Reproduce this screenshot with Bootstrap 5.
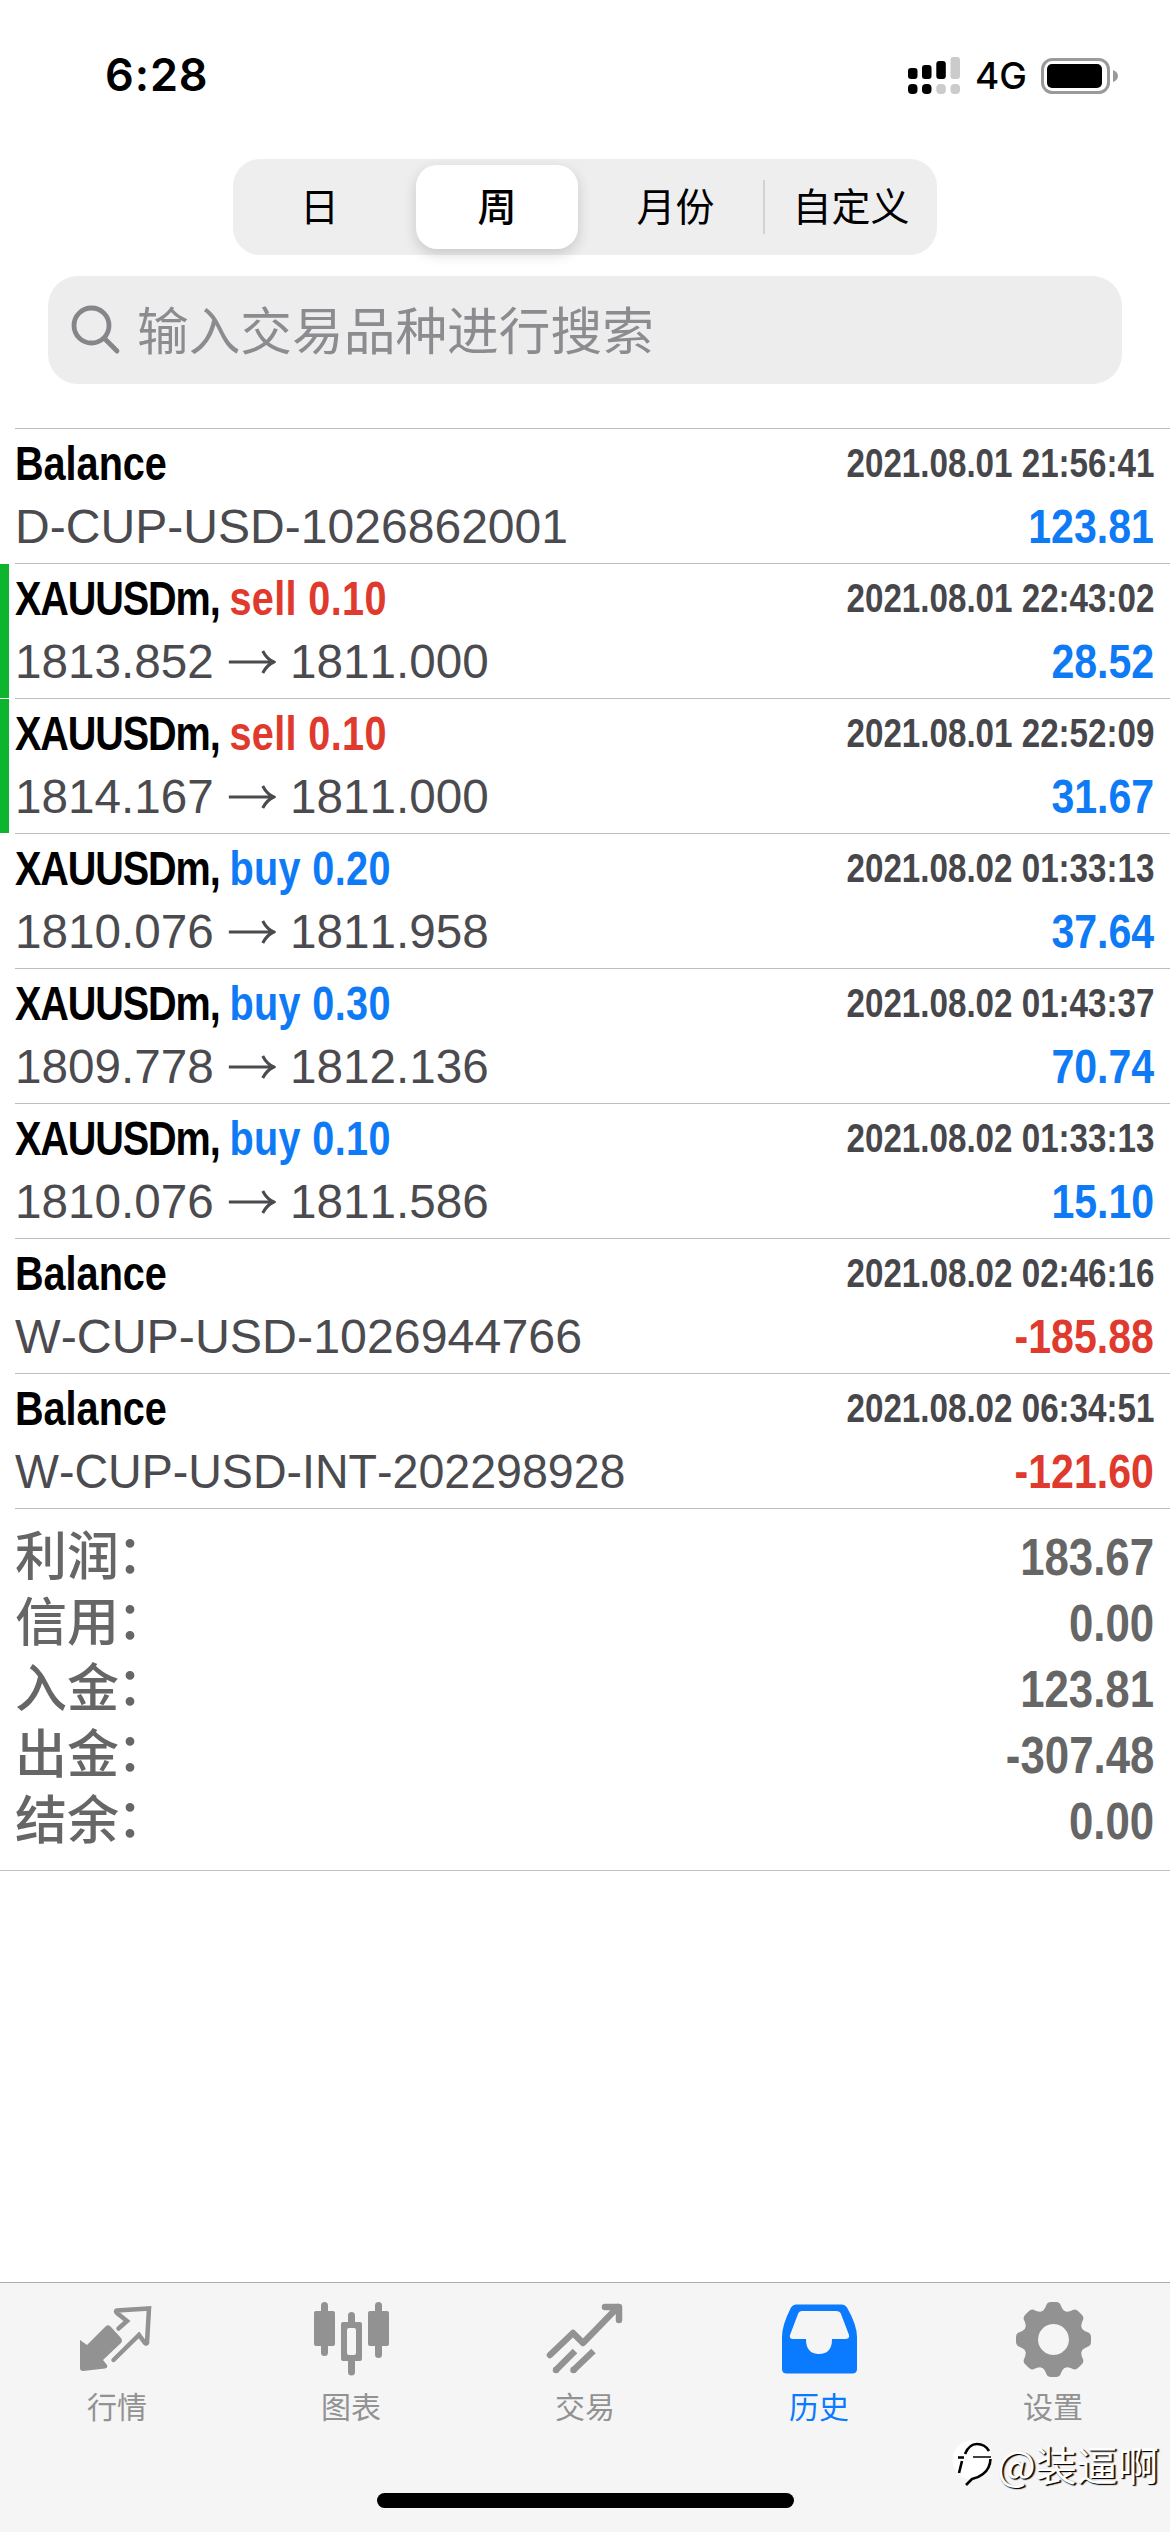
<!DOCTYPE html>
<html lang="zh-CN">
<head>
<meta charset="utf-8">
<title>历史</title>
<link rel="stylesheet" href="https://cdn.jsdelivr.net/npm/bootstrap@5.3.0/dist/css/bootstrap.min.css">
<style>
body{width:1170px;height:2532px;overflow:hidden;background:#fff;font-family:"Liberation Sans","Noto Sans CJK SC",sans-serif;color:#000}
.cjk{font-family:"Noto Sans CJK SC",sans-serif}
.statusbar{height:159px;padding:44px 51px 0 105px;font-family:Inter,sans-serif}
.statusbar .clock{font-size:45px;font-weight:600;line-height:62px;letter-spacing:.9px}
.statusbar .net{font-size:37px;font-weight:500;line-height:64px;margin-left:15px;margin-right:14px}
.seg{width:704px;height:96px;border-radius:27px;background:#eeeeef;padding:6px;font-size:39px}
.seg>div{line-height:84px;text-align:center}
.seg>div>span{display:block;margin-top:-3px;margin-bottom:3px}
.seg .on{background:#fff;border-radius:21px;box-shadow:0 5px 14px rgba(0,0,0,.16);font-weight:500}
.seg .rule{width:2px;height:54px;background:#d2d2d4}
.search{height:108px;margin:21px 48px 0;border-radius:30px;background:#ededee;padding-left:22px;color:#8c8c90;font-size:51.7px;line-height:100px}
.search span{margin:-5px 0 0 15px}
.deals{margin-top:44px}
.deal{height:135px;padding:5px 16px 0 15px;position:relative}
.deal::before{content:"";position:absolute;left:15px;right:0;top:0;height:1px;background:#bdbdc0}
.deal.closed::after{content:"";position:absolute;left:0;top:1px;width:9px;height:134px;background:#0cb52d}
.deal .top{height:62px;line-height:61px}
.deal .bot{height:62px;line-height:63px;font-size:47.5px;color:#4b4b4f}
.deal .note{transform-origin:left;font-kerning:none}
.sym{font-size:48px;font-weight:700;transform:scaleX(.825);transform-origin:left;white-space:pre}
.sym.pair{letter-spacing:-1.35px}
.sym .side{letter-spacing:.45px}
.when{font-size:40px;font-weight:700;transform:scaleX(.829);transform-origin:right;color:#47474b;white-space:pre;line-height:60px}
.amt{font-size:48px;font-weight:700;transform:scaleX(.855);transform-origin:right}
.up{color:#0f7af5}.down{color:#e0392d}
.totals{border-top:1px solid #bdbdc0;height:362px;margin-left:15px;padding:15px 16px 0 0;color:#666}
.totals .lab{font-size:52px;font-weight:500;line-height:66px}
.totals .colon{position:relative;top:-2px;left:-2px}
.totals>div{height:66px;line-height:66px}
.totals .val{font-size:52px;font-weight:700;transform:scaleX(.842);transform-origin:right}
.endline{height:1px;background:#c2c2c4}
.tabs{height:250px;background:#f5f5f6;border-top:1px solid #acacae;color:#929292;padding-top:12px}
.tabs a{width:234px;color:inherit;text-decoration:none;font-size:30px;line-height:41px}
.tabs a.active{color:#0a7aff}
.tabs svg{width:100px;height:90px}
.homebar{left:377px;top:2493px;width:417px;height:15px;border-radius:8px;background:#000}
.wm{left:952px;top:2436px;font-size:41px;line-height:54px;color:#fff;text-shadow:1px 1px 1px #000,2px 1px 1px #333}
</style>
<script src="https://cdn.jsdelivr.net/npm/bootstrap@5.3.0/dist/js/bootstrap.bundle.min.js"></script>
</head>
<body class="d-flex flex-column position-relative">
<header class="statusbar d-flex justify-content-between align-items-start flex-shrink-0">
<span class="clock">6:28</span>
<div class="d-flex align-items-center">
<svg width="52" height="38" viewBox="0 0 52 38"><g fill="#000"><rect x="0" y="11" width="9.5" height="11" rx="3"/><rect x="14" y="8" width="9.5" height="14" rx="3"/><rect x="28.300" y="4" width="9.500" height="18" rx="3"/><rect y="27" width="9.500" height="10" rx="4"/><rect x="14" y="27" width="9.500" height="10" rx="4"/></g><g fill="#cbcbcb"><rect x="42.500" y="0" width="9.500" height="22" rx="3"/><rect x="28.300" y="27" width="9.500" height="10" rx="4"/><rect x="42.500" y="27" width="9.500" height="10" rx="4"/></g></svg>
<span class="net">4G</span>
<svg width="78" height="36" viewBox="0 0 78 36"><rect x="1.500" y="1.500" width="66" height="33" rx="10" fill="none" stroke="#9a9a9a" stroke-width="3"/><rect x="6" y="6" width="55" height="24" rx="5"/><path d="M72 12q5 2 5 6t-5 6z" fill="#9a9a9a"/></svg>
</div>
</header>
<div class="seg cjk d-flex align-items-center mx-auto flex-shrink-0">
<div style="width:161px"><span>日</span></div><div class="on" style="width:162px;margin-left:16px"><span>周</span></div><div style="width:185px"><span style="padding-left:10px">月份</span></div><div class="rule"></div><div class="flex-fill"><span style="padding-left:6px">自定义</span></div>
</div>
<div class="search cjk d-flex align-items-center flex-shrink-0">
<svg width="52" height="52" viewBox="0 0 52 52" fill="none" stroke="#85858a" stroke-width="4.800" stroke-linecap="round"><circle cx="21.500" cy="21.500" r="17.500"/><path d="M34.500 34.500L47 47"/></svg>
<span>输入交易品种进行搜索</span>
</div>
<main class="deals flex-grow-1" id="deals"></main>
<nav class="tabs d-flex align-items-start cjk flex-shrink-0">
<a href="#" class="d-flex flex-column align-items-center"><svg viewBox="0 0 100 90"><path d="M13 45L20 50L39 31Q42 29 44 32L54 43Q56 46 54 48L36 65L40 70Q41 73 38 73.500L16 76Q13 76 13 73Z" fill="#929292"/><path d="M51.500 33.500L60 26L50 18Q48 16 50 15.500L82 13.500L80 48Q79 49 78 48L72 40L46.500 65" fill="none" stroke="#929292" stroke-width="4.500" stroke-linecap="round"/></svg>行情</a>
<a href="#" class="d-flex flex-column align-items-center"><svg viewBox="0 0 100 90" fill="#929292"><rect x="13" y="16" width="21" height="35" rx="2"/><rect x="20" y="7" width="7" height="54" rx="3.500"/><rect x="67" y="16" width="21" height="35" rx="2"/><rect x="74" y="7" width="7" height="56" rx="3.500"/><path d="M50.500 17a3.500 3.500 0 0 1 3.500 3.500V27h5q2 0 2 2V64q0 2-2 2h-5V77a3.500 3.500 0 0 1-7 0V66h-5q-2 0-2-2V29q0-2 2-2h5V20.500a3.500 3.500 0 0 1 3.500-3.500zM46 35V58q0 2 2 2h5q2 0 2-2V35q0-2-2-2h-5q-2 0-2 2z" fill-rule="evenodd"/></svg>图表</a>
<a href="#" class="d-flex flex-column align-items-center"><svg viewBox="0 0 100 90" fill="none" stroke="#929292" stroke-width="6.500" stroke-linejoin="round"><path d="M15 60L38 38L48 48L83 12M70 12H84V25" stroke-linecap="round"/><path d="M20.500 75.500L40 56M38 75.500L58.500 56"/><g fill="#929292" stroke="none"><circle cx="21" cy="75" r="3.250"/><circle cx="38.500" cy="75" r="3.250"/></g></svg>交易</a>
<a href="#" class="active d-flex flex-column align-items-center"><svg viewBox="0 0 100 90"><path fill="#0a7aff" fill-rule="evenodd" d="M27 9.500H73Q76 9.500 78 12.500Q88 30 88 42V74Q88 78.500 83 78.500H18Q13 78.500 13 74V42Q13 30 22 12.500Q24 9.500 27 9.500ZM33 16Q30 16 29 19L21 40Q20 44 24 44H37Q37 59 50 59T63 44H76Q81 44 80 40L72 19Q71 16 67 16Z"/></svg>历史</a>
<a href="#" class="d-flex flex-column align-items-center"><svg viewBox="0 0 100 90"><g fill="#929292" id="gear"></g></svg>设置</a>
</nav>
<div class="homebar position-absolute"></div>
<div class="wm cjk position-absolute d-flex align-items-center"><svg width="42" height="50" viewBox="0 0 42 50"><circle cx="20" cy="22" r="19.500" fill="#fff"/><path d="M6 19.500H12M13 16Q17 6 25 6Q33 6 37 13M10 23L7 35M38.500 21Q38 31 31 36Q26 40 20 41L14 47" fill="none" stroke="#000" stroke-width="2.600"/><path d="M21 19H39" stroke="#000" stroke-width="1.500"/></svg><span style="margin-left:3px">@装逼啊</span></div>
<script>
const rows=[
["Balance","","2021.08.01 21:56:41","D-CUP-USD-1026862001","123.81",0,1.012],
["XAUUSDm, ","sell 0.10","2021.08.01 22:43:02","1813.852|1811.000","28.52",1],
["XAUUSDm, ","sell 0.10","2021.08.01 22:52:09","1814.167|1811.000","31.67",1],
["XAUUSDm, ","buy 0.20","2021.08.02 01:33:13","1810.076|1811.958","37.64"],
["XAUUSDm, ","buy 0.30","2021.08.02 01:43:37","1809.778|1812.136","70.74"],
["XAUUSDm, ","buy 0.10","2021.08.02 01:33:13","1810.076|1811.586","15.10"],
["Balance","","2021.08.02 02:46:16","W-CUP-USD-1026944766","-185.88",0,1.018],
["Balance","","2021.08.02 06:34:51","W-CUP-USD-INT-202298928","-121.60",0,.98]];
const arrow='<svg width="47" height="26" viewBox="0 0 47 26" style="margin:0 14px 7px 15px" fill="none" stroke="#4b4b4f" stroke-width="3"><path d="M0 13H44M34 2Q38 10 45 13Q38 16 34 24"/></svg>';
let h=rows.map(r=>`<div class="deal ${r[5]?'closed':''}"><div class="top d-flex justify-content-between"><span class="sym ${r[1]?'pair':''}">${r[0]}<span class="side ${r[1][0]=='s'?'down':'up'}">${r[1]}</span></span><span class="when">${r[2]}</span></div><div class="bot d-flex justify-content-between"><span class="note" style="transform:scaleX(${r[6]||1.003})">${r[3].replace('|',arrow)}</span><span class="amt ${r[4][0]=='-'?'down':'up'}">${r[4]}</span></div></div>`).join('');
h+='<div class="totals">'+[["利润","183.67"],["信用","0.00"],["入金","123.81"],["出金","-307.48"],["结余","0.00"]].map(t=>`<div class="d-flex justify-content-between"><span class="lab">${t[0]}<span class="colon">：</span></span><span class="val">${t[1]}</span></div>`).join('')+'</div><div class="endline"></div>';
document.getElementById('deals').innerHTML=h;
let g='<path fill-rule="evenodd" d="M50.500 14a30.500 30.500 0 1 0 .01 0zM50.500 29a15.500 15.500 0 1 1-.01 0z"/>';
for(let a=0;a<360;a+=45)g+=`<path d="M37 18Q41 16 43 11Q44 7 48 7H53Q57 7 58 11Q60 16 64 18Z" transform="rotate(${a} 50.500 44.500)"/>`;
document.getElementById('gear').innerHTML=g;
</script>
</body>
</html>
